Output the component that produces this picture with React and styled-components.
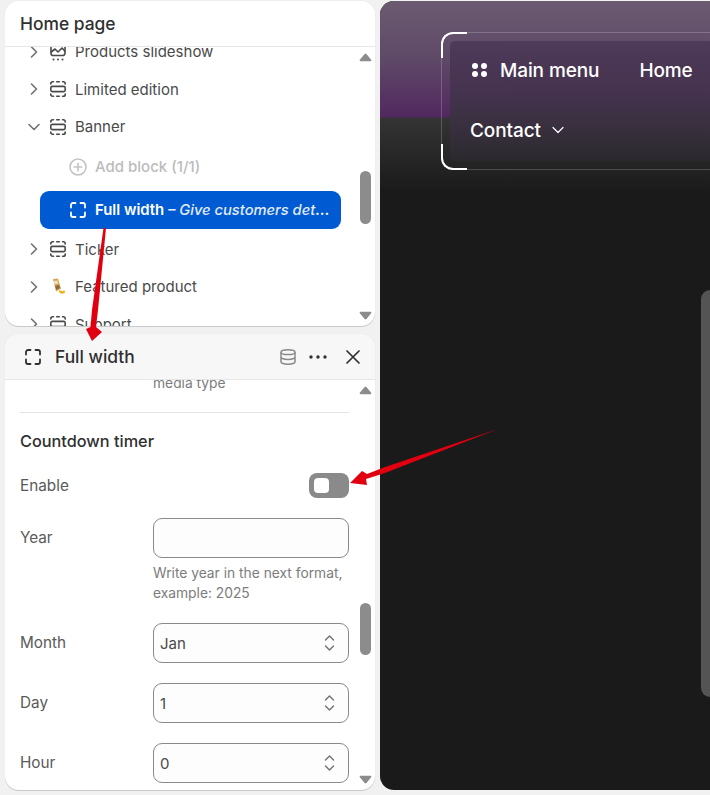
import React from "react";
import styled, { createGlobalStyle } from "styled-components";

const Global = createGlobalStyle`
  html, body { margin: 0; padding: 0; width: 710px; height: 795px; overflow: hidden; background: #f1f1f1; }
  * { box-sizing: border-box; }
  body { font-family: Inter, "Liberation Sans", sans-serif; font-size: 14px; color: #303030; }
`;

const Page = styled.div`
  position: relative; display: flex; gap: 5px; width: 710px; height: 795px; padding: 1px 0 5px 5px; overflow: hidden;
`;
const Sidebar = styled.div`display: flex; flex-direction: column; gap: 8px; width: 370px; flex: none;`;
const Panel = styled.section`
  display: flex; flex-direction: column; height: ${p => p.$h}px; background: #fff; border-radius: 14px; overflow: hidden;
  box-shadow: 0 1px 0 #c9c9c9, 0 0 1px #d0d0d0;
`;
const PanelHead = styled.header`
  display: flex; align-items: center; height: ${p => p.$h}px; flex: none; padding: 0 15px 0 ${p => p.$tint ? 20 : 15}px; border-bottom: 1px solid #e6e6e6;
  background: ${p => p.$tint ? "#f7f7f7" : "#fff"};
`;
const PageTitle = styled.h1`margin: 0; font-size: 17.4px; font-weight: 550; color: #303030; line-height: 20px;`;
const BlockTitle = styled.h2`margin: 0 0 0 14px; font-size: 17.4px; font-weight: 550; color: #303030; flex: 1;`;
const HeadActions = styled.div`display: flex; align-items: center;`;
const HeadIcon = styled.span`display: flex; margin-left: ${p => p.$ml}px; color: ${p => p.$c};`;
const PanelBody = styled.div`flex: 1; display: flex; min-height: 0;`;
const Tree = styled.div`flex: 1; min-width: 0; overflow: hidden;`;
const Rows = styled.div`margin-top: -14px;`;
const Row = styled.div`display: flex; align-items: center; height: 37.5px; padding-left: 17px; color: #4a4a4a; font-size: 15px;`;
const Chevron = styled.span`display: flex; justify-content: center; width: 24px; flex: none; color: #707070;`;
const RowIcon = styled.span`display: flex; justify-content: center; width: 16px; margin: 0 9px 0 4px; flex: none; color: #4a4a4a;`;
const AddRow = styled.div`display: flex; align-items: center; height: 42px; padding-left: 64px; color: #bcbcbc; font-size: 15px; font-weight: 500; gap: 8px;`;
const Selected = styled.div`
  display: flex; align-items: center; height: 38px; margin: 3px 0 2px 35px; width: 301px; padding: 0 8px 0 30px;
  background: #005bd3; border-radius: 9px; color: #fff; font-size: 14.9px; gap: 9px;
`;
const SelectedText = styled.span`flex: 1; min-width: 0; white-space: nowrap; overflow: hidden; text-overflow: ellipsis; font-weight: 600;`;
const Hint = styled.em`font-weight: 500; font-size: 14.7px; color: #e3ecf9;`;
const Scrollbar = styled.div`display: flex; flex-direction: column; align-items: center; width: 20px; flex: none; padding: 6px 0;`;
const Thumb = styled.div`width: 11px; height: ${p => p.$h}px; margin-top: ${p => p.$top}px; margin-bottom: auto; background: #8c8c8c; border-radius: 6px;`;
const Form = styled.div`flex: 1; min-width: 0; overflow: hidden; padding: 0 6px 0 15px;`;
const ClippedHelp = styled.p`margin: -7px 0 0 133px; font-size: 13.8px; line-height: 20px; color: #7c7c7c;`;
const Divider = styled.hr`margin: 19px 0 18px; border: 0; border-top: 1px solid #e3e3e3;`;
const SectionTitle = styled.h3`margin: 0; font-size: 16.3px; line-height: 20px; font-weight: 550; color: #303030;`;
const ToggleRow = styled.div`display: flex; align-items: center; justify-content: space-between; height: 25px; margin-top: 22px;`;
const Label = styled.label`font-size: 15.3px; color: #5a5a5a; line-height: ${p => p.$lh || 24}px;`;
const Toggle = styled.div`display: flex; align-items: center; width: 40px; height: 25px; padding-left: 5px; border-radius: 8px; background: #8a8a8a;`;
const Knob = styled.span`width: 15px; height: 15px; border-radius: 4px; background: #fff;`;
const Field = styled.div`display: grid; grid-template-columns: 133px 196px; margin-top: 20px;`;
const TextBox = styled.input`
  display: block; width: 100%; height: 40px; border: 1px solid #8a8a8a; border-radius: 9px; background: #fdfdfd; padding: 0 7px; outline: 0;
`;
const Select = styled.div`
  display: flex; align-items: center; justify-content: space-between; height: 40px; padding: 0 13px 0 6px; border: 1px solid #8a8a8a; border-radius: 9px;
  background: #fdfdfd; font-size: 15px; color: #4a4a4a;
`;
const Help = styled.p`margin: 5px 0 0; font-size: 13.8px; line-height: 20px; color: #7c7c7c;`;

const Preview = styled.main`
  flex: 1; min-width: 0; height: 789px; overflow: hidden; display: flex; flex-direction: column; border-radius: 14px 0 0 14px;
  background: #1a1a1a;
`;
const Hero = styled.div`
  height: 189px; flex: none; padding: 31px 0 0 61px;
  background: linear-gradient(180deg, #6b5a70 0, #5e4867 60px, #52285f 116px, #343434 117px, #1a1a1a 192px);
`;
const NavFrame = styled.div`
  position: relative; width: 400px; height: 138px; padding: 8px 0 0 8px; border: 1px solid rgba(255,255,255,.2); border-right: 0; border-radius: 14px 0 0 14px;
  &::before, &::after {
    content: ""; position: absolute; left: -1px; width: 24px; height: 24px; border: 0 solid #fff; border-left-width: 2px;
  }
  &::before { top: -1px; border-top-width: 2px; border-top-left-radius: 12px; }
  &::after { bottom: -1px; border-bottom-width: 2px; border-bottom-left-radius: 12px; }
`;
const Nav = styled.nav`
  display: flex; flex-wrap: wrap; align-content: flex-start; width: 391px; height: 120px; border-radius: 5px 0 0 5px; padding: 0 120px 0 21px;
  background: linear-gradient(180deg, #4e3a59 0, #45334f 50px, #39303f 85px, #2a292d 120px);
`;
const NavItem = styled.a`
  display: flex; align-items: center; height: 60px; margin: ${p => p.$mt || 0}px ${p => p.$mr || 0}px 0 ${p => p.$ml || 0}px;
  color: #fff; font-size: 19px; font-weight: 500; letter-spacing: -.1px;
`;
const Dots = styled.span`display: flex; margin: 0 12px 0 0;`;
const NavChevron = styled.span`display: flex; margin-left: 11px;`;
const Rail = styled.div`
  width: 9px; height: 407px; margin: 100px 0 0 auto; background: #545454; border-radius: 9px 0 0 9px;
`;
const Arrows = styled.svg`position: absolute; left: 0; top: 0; pointer-events: none;`;

const ChevronRight = () => <svg width="10" height="12" viewBox="0 0 10 12" fill="none"><path d="M2.500 1 7.500 6l-5 5" stroke="currentColor" strokeWidth="1.6" strokeLinecap="round" strokeLinejoin="round"/></svg>;
const ChevronDown = () => <svg width="12" height="10" viewBox="0 0 12 10" fill="none"><path d="M1 2.500 6 7.500l5-5" stroke="currentColor" strokeWidth="1.6" strokeLinecap="round" strokeLinejoin="round"/></svg>;
const SectionIcon = () => (
  <svg width="16" height="16" viewBox="0 0 16 16" fill="none" stroke="currentColor" strokeWidth="1.6" strokeLinecap="round">
    <path d="M.8 3V2.600A1.800 1.800 0 0 1 2.600.8H3.500M6.700.8h2.600M12.500.8h.9a1.800 1.800 0 0 1 1.800 1.800V3M.8 13v.4a1.800 1.800 0 0 0 1.800 1.800h.9M6.700 15.200h2.600M12.500 15.200h.9a1.800 1.800 0 0 0 1.800-1.800V13"/>
    <rect x=".8" y="5.400" width="14.400" height="5.200" rx="1.600"/>
  </svg>
);
const FullWidthIcon = () => (
  <svg width="16" height="16" viewBox="0 0 16 16" fill="none" stroke="currentColor" strokeWidth="1.8" strokeLinecap="round">
    <path d="M1 5.500V3a2 2 0 0 1 2-2h2.500M10.500 1H13a2 2 0 0 1 2 2v2.500M1 10.500V13a2 2 0 0 0 2 2h2.500M10.500 15H13a2 2 0 0 0 2-2v-2.500"/>
  </svg>
);
const SlideshowIcon = () => (
  <svg width="16" height="18" viewBox="0 0 16 18" fill="none" stroke="currentColor" strokeWidth="1.6" strokeLinecap="round" strokeLinejoin="round" style={{ marginTop: 2 }}>
    <path d="M1 .8v8.400A2.300 2.300 0 0 0 3.300 11.500h9.400A2.300 2.300 0 0 0 15 9.200V.8"/>
    <path d="M1.200 8 5 5l3 3 4-4 2.800 3"/>
    <circle cx="10" cy="1.600" r=".7"/>
    <path d="M3.500 15.600h.01M8 15.600h.01M12.500 15.600h.01" strokeWidth="2"/>
  </svg>
);
const ProductThumb = () => (
  <svg width="16" height="18" viewBox="0 0 16 18">
    <path d="M3 1l5-.5 3 10-5 3z" fill="#d9a35c"/>
    <path d="M3.500 3l4-.5.8 3-3.800.7z" fill="#efe0b8"/>
    <path d="M5 8l4-1 1 3-3.500 2z" fill="#8a6a3c"/>
    <path d="M9 12l3.500 1.200 2-1 .6 2.400-3 1.400-3-1.400z" fill="#efb11d"/>
  </svg>
);
const ArrowUp = () => <svg width="13" height="9" viewBox="0 0 13 9"><path d="M5.600 1 .8 6.800c-.4.6 0 1.400.7 1.400h10c.7 0 1.100-.8.7-1.400L7.400 1c-.5-.5-1.300-.5-1.800 0z" fill="#8c8c8c"/></svg>;
const ArrowDown = () => <svg width="13" height="9" viewBox="0 0 13 9"><path d="M5.600 8 .8 2.200C.4 1.600.8.8 1.500.8h10c.7 0 1.100.8.7 1.400L7.400 8c-.5.5-1.300.5-1.800 0z" fill="#8c8c8c"/></svg>;
const UpDown = () => (
  <svg width="11" height="18" viewBox="0 0 11 18" fill="none" stroke="#707070" strokeWidth="1.4" strokeLinecap="round" strokeLinejoin="round">
    <path d="M1.500 6l4-4 4 4M1.500 12l4 4 4-4"/>
  </svg>
);

const Node = ({ icon, children, open }) => (
  <Row>
    <Chevron>{open ? <ChevronDown /> : <ChevronRight />}</Chevron>
    <RowIcon>{icon}</RowIcon>
    {children}
  </Row>
);
const SelectField = ({ label, value }) => (
  <Field>
    <Label $lh={40}>{label}</Label>
    <Select>{value}<UpDown /></Select>
  </Field>
);

export default function App() {
  return (
    <Page>
      <Global />
      <Sidebar>
        <Panel $h={325}>
          <PanelHead $h={46}><PageTitle>Home page</PageTitle></PanelHead>
          <PanelBody>
            <Tree>
              <Rows>
                <Node icon={<SlideshowIcon />}>Products slideshow</Node>
                <Node icon={<SectionIcon />}>Limited edition</Node>
                <Node icon={<SectionIcon />} open>Banner</Node>
                <AddRow>
                  <svg width="18" height="18" viewBox="0 0 18 18" fill="none" stroke="#c4c4c4" strokeWidth="1.6" strokeLinecap="round">
                    <circle cx="9" cy="9" r="8"/><path d="M9 5.200v7.600M5.200 9h7.600"/>
                  </svg>
                  Add block (1/1)
                </AddRow>
                <Selected>
                  <FullWidthIcon />
                  <SelectedText>Full width <Hint>– Give customers details about the banner</Hint></SelectedText>
                </Selected>
                <Node icon={<SectionIcon />}>Ticker</Node>
                <Node icon={<ProductThumb />}>Featured product</Node>
                <Node icon={<SectionIcon />}>Support</Node>
              </Rows>
            </Tree>
            <Scrollbar>
              <ArrowUp />
              <Thumb $top={109} $h={53} />
              <ArrowDown />
            </Scrollbar>
          </PanelBody>
        </Panel>
        <Panel $h={456}>
          <PanelHead $h={46} $tint>
            <HeadIcon $c="#303030"><FullWidthIcon /></HeadIcon>
            <BlockTitle>Full width</BlockTitle>
            <HeadActions>
              <HeadIcon $c="#8a8a8a">
                <svg width="16" height="16" viewBox="0 0 16 16" fill="none" stroke="currentColor" strokeWidth="1.5">
                  <ellipse cx="8" cy="3.200" rx="7" ry="2.400"/><path d="M1 3.200v9.600c0 1.300 3.100 2.400 7 2.400s7-1.100 7-2.400V3.200M1 8c0 1.300 3.100 2.400 7 2.400S15 9.300 15 8"/>
                </svg>
              </HeadIcon>
              <HeadIcon $ml={13} $c="#303030">
                <svg width="18" height="6" viewBox="0 0 18 6" fill="currentColor"><circle cx="2" cy="3" r="1.700"/><circle cx="9" cy="3" r="1.700"/><circle cx="16" cy="3" r="1.700"/></svg>
              </HeadIcon>
              <HeadIcon $ml={19} $c="#303030">
                <svg width="14" height="14" viewBox="0 0 14 14" fill="none" stroke="currentColor" strokeWidth="1.700" strokeLinecap="round"><path d="M1 1l12 12M13 1 1 13"/></svg>
              </HeadIcon>
            </HeadActions>
          </PanelHead>
          <PanelBody>
            <Form>
              <ClippedHelp>media type</ClippedHelp>
              <Divider />
              <SectionTitle>Countdown timer</SectionTitle>
              <ToggleRow><Label>Enable</Label><Toggle><Knob /></Toggle></ToggleRow>
              <Field>
                <Label $lh={40}>Year</Label>
                <div>
                  <TextBox aria-label="Year" />
                  <Help>Write year in the next format, example: 2025</Help>
                </div>
              </Field>
              <SelectField label="Month" value="Jan" />
              <SelectField label="Day" value="1" />
              <SelectField label="Hour" value="0" />
            </Form>
            <Scrollbar>
              <ArrowUp />
              <Thumb $top={208} $h={52} />
              <ArrowDown />
            </Scrollbar>
          </PanelBody>
        </Panel>
      </Sidebar>
      <Preview>
        <Hero>
          <NavFrame>
            <Nav>
              <NavItem $mr={40} $mt={-1}>
                <Dots>
                  <svg width="17" height="16" viewBox="0 0 17 16" fill="#fff"><circle cx="4" cy="4" r="3"/><circle cx="13" cy="4" r="3"/><circle cx="4" cy="12" r="3"/><circle cx="13" cy="12" r="3"/></svg>
                </Dots>
                Main menu
              </NavItem>
              <NavItem $mt={-1}>Home</NavItem>
              <NavItem $ml={-1}>
                Contact
                <NavChevron>
                  <svg width="12" height="8" viewBox="0 0 12 8" fill="none" stroke="#fff" strokeWidth="1.200" strokeLinecap="round" strokeLinejoin="round"><path d="M1 1.500 6 6.500l5-5"/></svg>
                </NavChevron>
              </NavItem>
            </Nav>
          </NavFrame>
        </Hero>
        <Rail />
      </Preview>
      <Arrows width="710" height="795" viewBox="0 0 710 795">
        <path d="M106 228 98 310 96 327 102 332 92 341 86 329 90.500 327 92 310 103.500 228z" fill="#e0000f"/>
        <path d="M498 429 385 467 367 474 362 471 350 483 367 485 366 479 385 473z" fill="#e0000f"/>
      </Arrows>
    </Page>
  );
}
